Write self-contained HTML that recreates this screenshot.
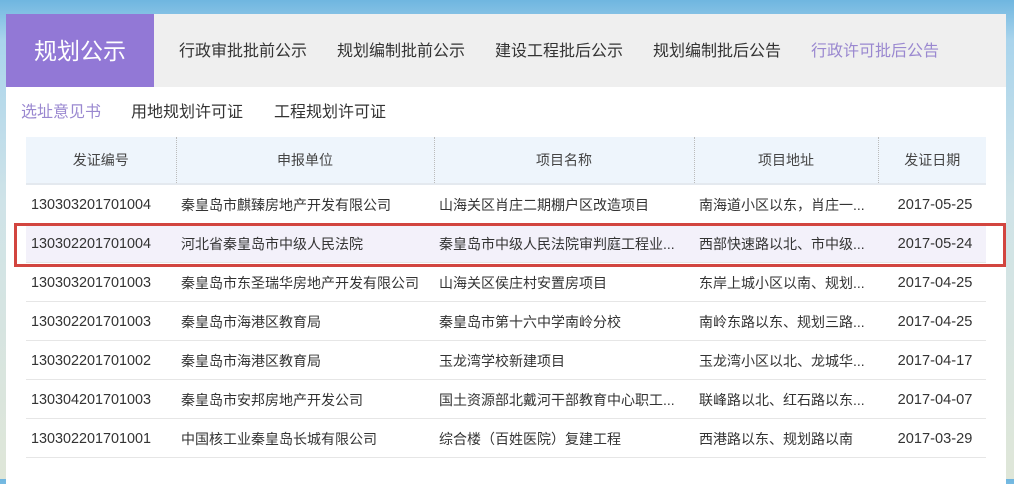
<!DOCTYPE html>
<html><head><meta charset="utf-8"><style>
*{margin:0;padding:0;box-sizing:border-box}
body{width:1014px;height:479px;overflow:hidden;position:relative;font-family:"Liberation Sans","Noto Sans CJK SC",sans-serif;background:linear-gradient(180deg,#6fb6e0 0,#a9d4ec 40px,#cfe3e8 200px,#dfe6d8 479px)}
.panel{position:absolute;left:6px;top:14px;width:1000px;height:470px;background:#fff}
.top{height:73px;background:#efefef;position:relative}
.brand{position:absolute;left:0;top:0;width:148px;height:73px;background:#9278d6;color:#fff;font-size:23px;line-height:75px;text-align:center}
.nav{position:absolute;top:0;line-height:75px;font-size:16px;color:#333}
.sub{position:absolute;top:88px;font-size:16px;color:#333;line-height:22px}
table{position:absolute;left:20px;top:123px;width:960px;border-collapse:collapse;font-size:14px;color:#333}
th{height:47px;background:#eef5fc;font-weight:normal;color:#444;border-bottom:2px solid #e4e9ef}
th+th{border-left:1px dotted #bbb}
td{height:39px;border-bottom:1px solid #e6e6e6;padding-left:5px;padding-top:2px;white-space:nowrap}
td.n{font-size:14.4px}
td:last-child{text-align:center;padding-left:6px;font-size:14.6px}
tr.hl td{background:#f3f1fa}
.red{position:absolute;left:14px;top:223px;width:992px;height:44px;border:3px solid #d2453f}
</style></head><body>
<div class="panel">
<div class="top">
<div class="brand">规划公示</div>
<div class="nav" style="left:173px">行政审批批前公示</div>
<div class="nav" style="left:331px">规划编制批前公示</div>
<div class="nav" style="left:489px">建设工程批后公示</div>
<div class="nav" style="left:647px">规划编制批后公告</div>
<div class="nav" style="left:805px;color:#9a88d0">行政许可批后公告</div>
</div>
<div class="sub" style="left:15px;color:#9a88d0">选址意见书</div>
<div class="sub" style="left:125px">用地规划许可证</div>
<div class="sub" style="left:268px">工程规划许可证</div>
<table>
<colgroup><col style="width:150px"><col style="width:258px"><col style="width:260px"><col style="width:184px"><col style="width:108px"></colgroup>
<tr><th>发证编号</th><th>申报单位</th><th>项目名称</th><th>项目地址</th><th>发证日期</th></tr>
<tr><td class="n">130303201701004</td><td>秦皇岛市麒臻房地产开发有限公司</td><td>山海关区肖庄二期棚户区改造项目</td><td>南海道小区以东，肖庄一...</td><td>2017-05-25</td></tr>
<tr class="hl"><td class="n">130302201701004</td><td>河北省秦皇岛市中级人民法院</td><td>秦皇岛市中级人民法院审判庭工程业...</td><td>西部快速路以北、市中级...</td><td>2017-05-24</td></tr>
<tr><td class="n">130303201701003</td><td>秦皇岛市东圣瑞华房地产开发有限公司</td><td>山海关区侯庄村安置房项目</td><td>东岸上城小区以南、规划...</td><td>2017-04-25</td></tr>
<tr><td class="n">130302201701003</td><td>秦皇岛市海港区教育局</td><td>秦皇岛市第十六中学南岭分校</td><td>南岭东路以东、规划三路...</td><td>2017-04-25</td></tr>
<tr><td class="n">130302201701002</td><td>秦皇岛市海港区教育局</td><td>玉龙湾学校新建项目</td><td>玉龙湾小区以北、龙城华...</td><td>2017-04-17</td></tr>
<tr><td class="n">130304201701003</td><td>秦皇岛市安邦房地产开发公司</td><td>国土资源部北戴河干部教育中心职工...</td><td>联峰路以北、红石路以东...</td><td>2017-04-07</td></tr>
<tr><td class="n">130302201701001</td><td>中国核工业秦皇岛长城有限公司</td><td>综合楼（百姓医院）复建工程</td><td>西港路以东、规划路以南</td><td>2017-03-29</td></tr>
</table>
</div>
<div class="red"></div>
</body></html>
